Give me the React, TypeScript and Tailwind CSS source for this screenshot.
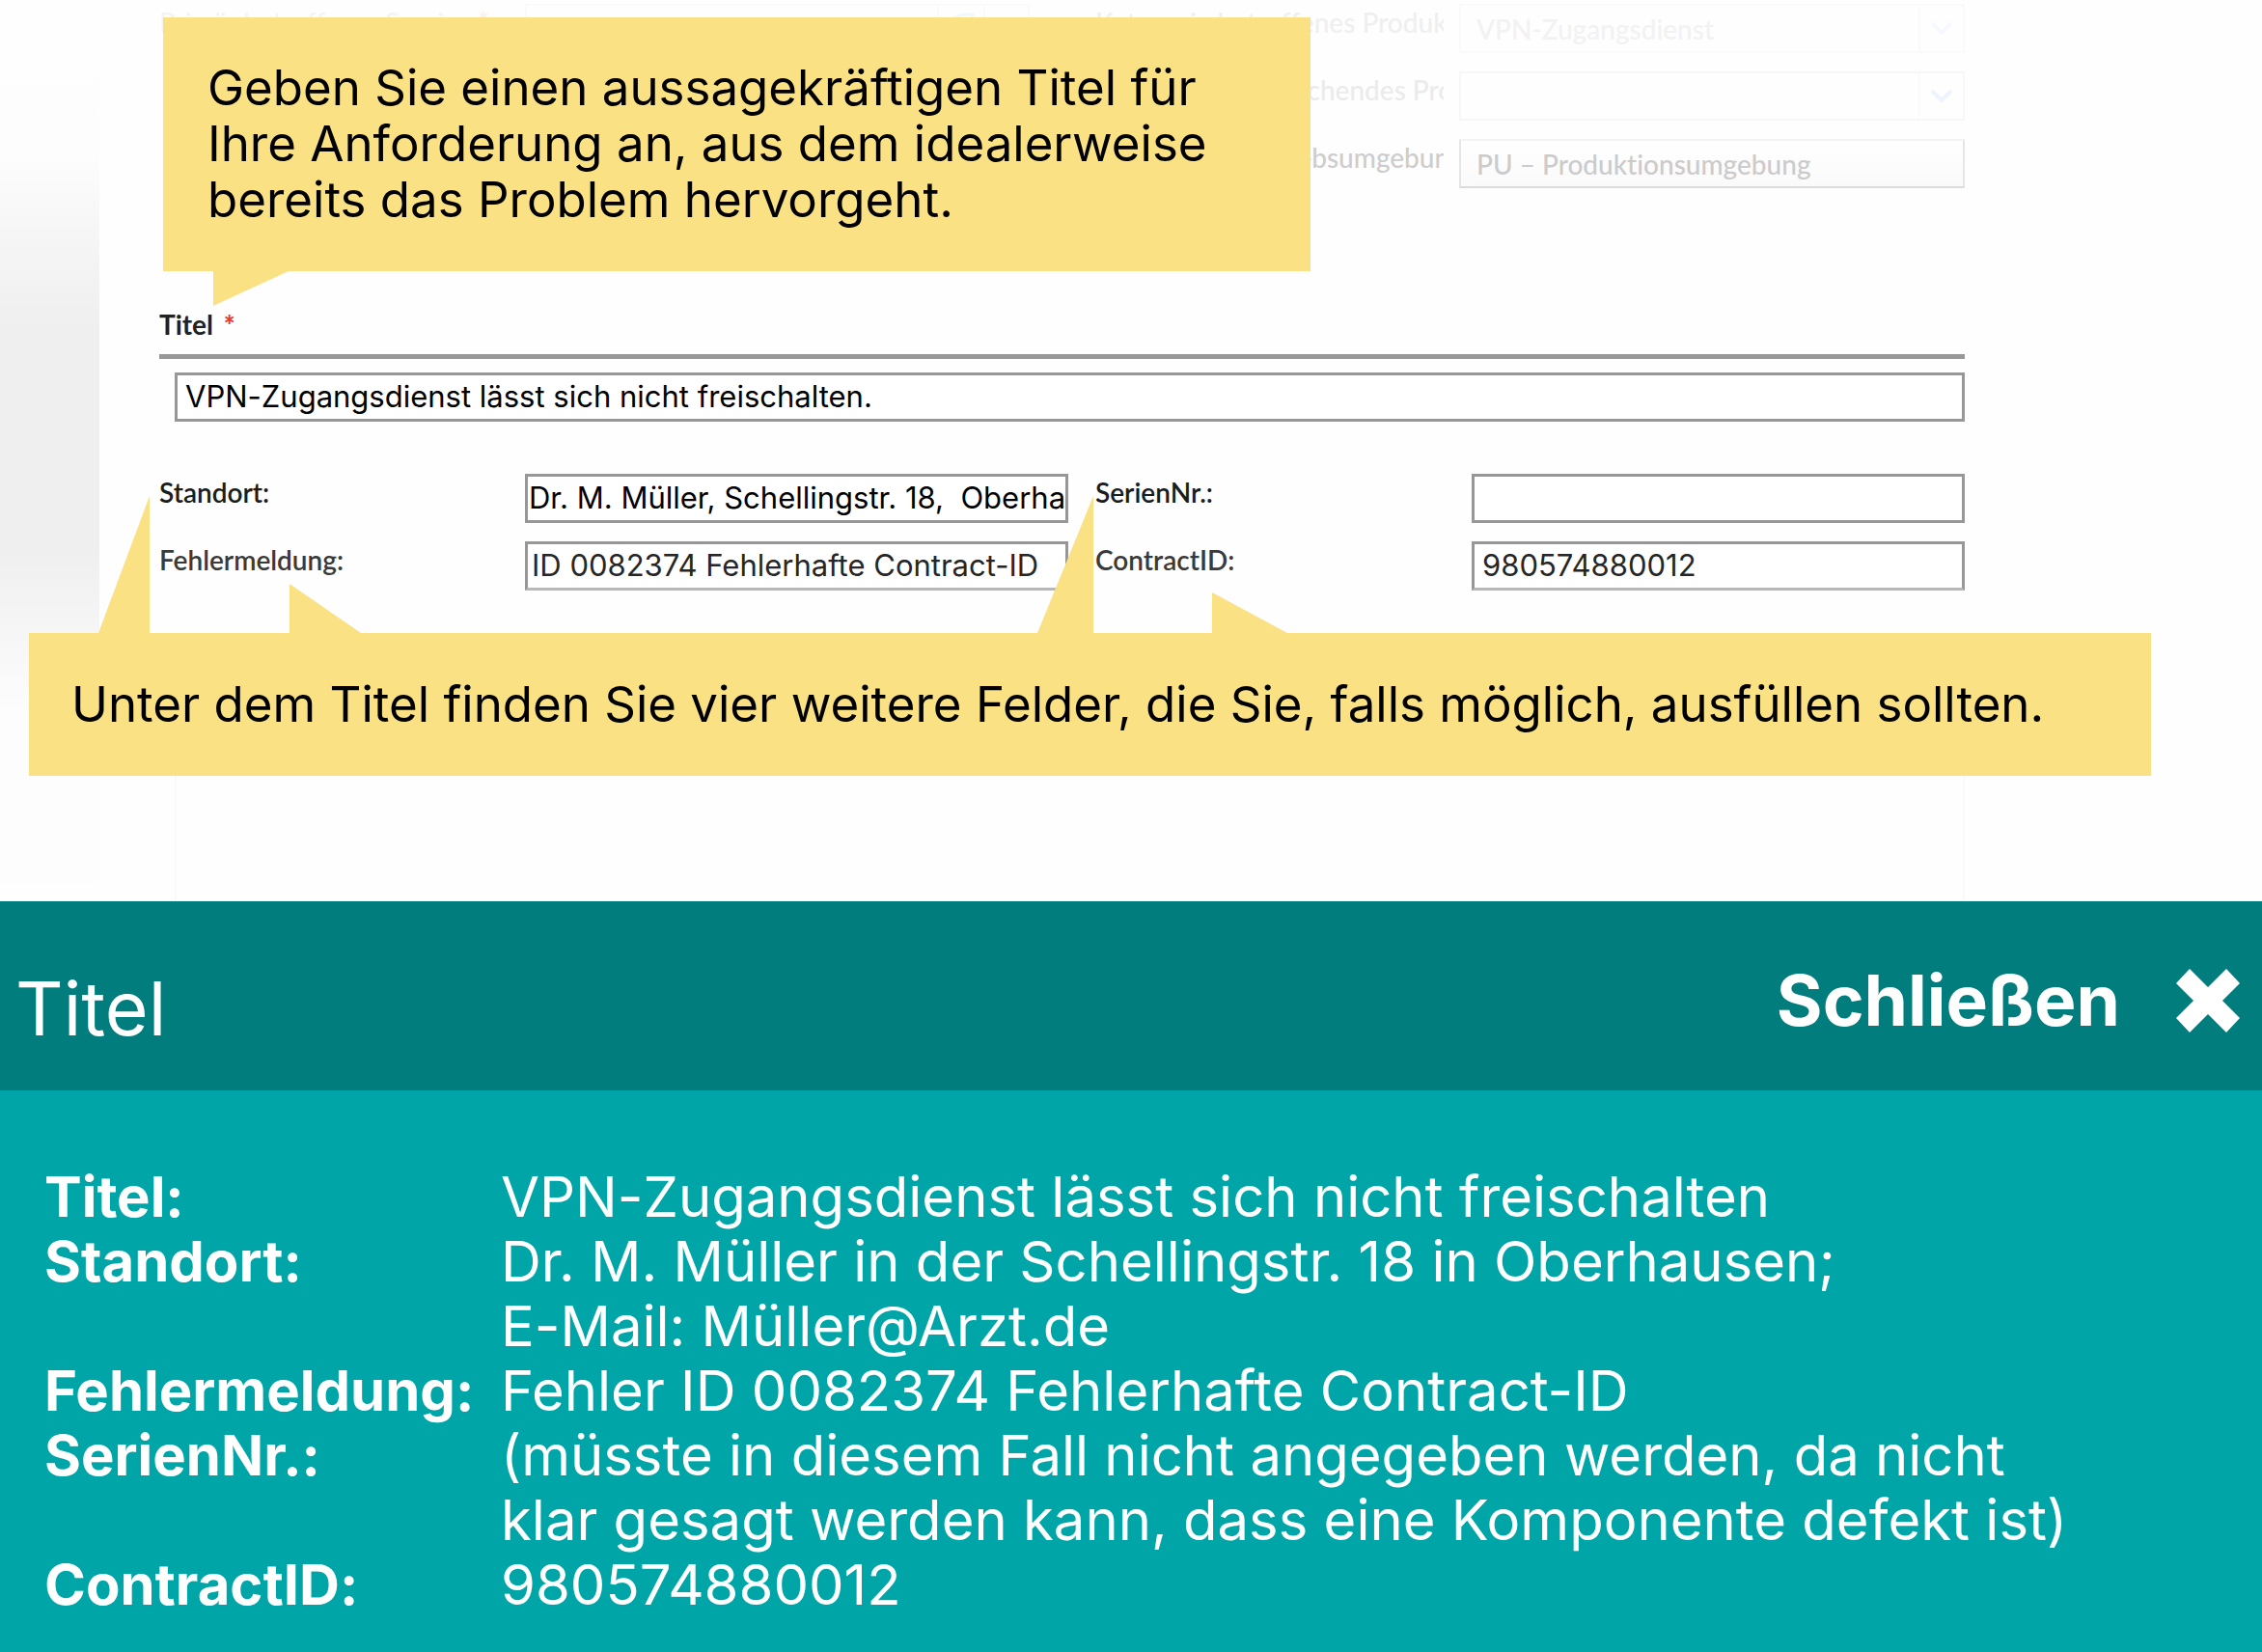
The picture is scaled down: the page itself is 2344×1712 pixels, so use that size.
import type { ReactNode } from 'react';

const YELLOW = '#fae184';

function Label({ htmlFor, className = '', children }: { htmlFor: string; className?: string; children: ReactNode }) {
  return (
    <label
      htmlFor={htmlFor}
      className={`block overflow-hidden self-start pt-px whitespace-nowrap font-['Lato',sans-serif] text-[28px] leading-9 ${className}`}
    >
      {children}
    </label>
  );
}

function TextField({ id, value, className = '' }: { id: string; value: string; className?: string }) {
  return (
    <input
      id={id}
      type="text"
      defaultValue={value}
      className={`h-[51px] w-full min-w-0 border-3 bg-white pb-0.5 text-[31px] outline-none ${className}`}
    />
  );
}

function Dropdown({ id, value, className, chevron }: { id: string; value: string; className: string; chevron?: string }) {
  return (
    <div className="relative ml-4">
      <select
        id={id}
        className={`block h-[51px] w-full appearance-none border-2 px-4 font-['Lato',sans-serif] text-[28px] font-medium outline-none ${className}`}
      >
        <option>{value}</option>
      </select>
      {chevron && (
        <div className="pointer-events-none absolute inset-y-0.5 right-0.5 flex w-[46px] items-center justify-center border-l-2 border-[#fafafa]">
          <svg width="22" height="14" viewBox="0 0 22 14" fill="none">
            <path d="M2 2 L11 11 L20 2" stroke={chevron} strokeWidth="4" strokeLinecap="round" strokeLinejoin="round" />
          </svg>
        </div>
      )}
    </div>
  );
}

function PastFields() {
  return (
    <div className="grid grid-cols-[379px_523px_1fr] gap-y-[19px] pt-1">
      <Label htmlFor="service" className="text-[#f3f3f3]">
        Primär betroffener Service <span className="text-[#fdecec]">*</span>
      </Label>
      <div className="flex h-[51px] border-2 border-[#fafafa]">
        <input id="service" type="text" className="min-w-0 flex-1 outline-none" />
        <button type="button" aria-label="Service öffnen" className="flex w-12 items-start justify-center border-l-2 border-[#fafafa] pt-1.5">
          <svg width="30" height="30" viewBox="0 0 30 30" fill="none" stroke="#f1f8fc" strokeWidth="3">
            <path d="M3 10 Q14 1 27 3 L24 14 M3 10 L3 26 H22 V14" />
          </svg>
        </button>
        <span className="w-[46px] border-l-2 border-[#fafafa]" />
      </div>
      <div className="grid grid-cols-[361px_1fr] pl-[68px]">
        <Label htmlFor="product" className="font-medium text-[#efefef]">Kategorie betroffenes Produkt</Label>
        <Dropdown id="product" value="VPN-Zugangsdienst" className="border-[#fafafa] text-[#f2f2f2]" chevron="#f5f9ff" />
      </div>
      <div className="col-start-3 grid grid-cols-[361px_1fr] pl-[68px]">
        <Label htmlFor="other" className="font-medium text-[#ebebeb]">Kategorie entsprechendes Produkt</Label>
        <Dropdown id="other" value="" className="border-[#f7f7f7]" chevron="#edf4ff" />
      </div>
      <div className="col-start-3 grid grid-cols-[361px_1fr] pl-[68px]">
        <Label htmlFor="environment" className="font-medium text-[#cdcdcd]">Eingesetzte Betriebsumgebung</Label>
        <Dropdown
          id="environment"
          value="PU – Produktionsumgebung"
          className="border-t-[#f3f3f3] border-r-[#e6e6e6] border-b-[#dcdcdc] border-l-[#e6e6e6] bg-linear-to-b from-white to-[#fafafa] text-[#cbcbcb]"
        />
      </div>
    </div>
  );
}

function TitleCallout() {
  return (
    <div className="absolute top-[18px] left-[169px] w-[1189px] bg-[#fae184] pt-11 pb-[45px] pl-[46px] text-[51px] leading-[58px] text-black">
      <p className="whitespace-nowrap">
        Geben Sie einen aussagekräftigen Titel für
        <br />
        Ihre Anforderung an, aus dem idealerweise
        <br />
        bereits das Problem hervorgeht.
      </p>
      <svg className="absolute top-full left-[52px]" width="78" height="36" viewBox="0 0 78 36">
        <polygon points="0,0 78,0 0,36" fill={YELLOW} />
      </svg>
    </div>
  );
}

function FieldsCallout() {
  return (
    <div className="absolute top-[656px] right-[115px] left-[30px] bg-[#fae184] pt-[45px] pb-[45px] pl-[44px] text-[51px] leading-[58px] text-black">
      <p className="whitespace-nowrap">Unter dem Titel finden Sie vier weitere Felder, die Sie, falls möglich, ausfüllen sollten.</p>
      <svg className="absolute bottom-full left-[72px]" width="53" height="142" viewBox="0 0 53 142">
        <polygon points="53,0 53,142 0,142" fill={YELLOW} />
      </svg>
      <svg className="absolute bottom-full left-[270px]" width="74" height="51" viewBox="0 0 74 51">
        <polygon points="0,0 0,51 74,51" fill={YELLOW} />
      </svg>
      <svg className="absolute bottom-full left-[1045px]" width="58" height="142" viewBox="0 0 58 142">
        <polygon points="58,0 58,142 0,142" fill={YELLOW} />
      </svg>
      <svg className="absolute bottom-full left-[1226px]" width="78" height="42" viewBox="0 0 78 42">
        <polygon points="0,0 0,42 78,42" fill={YELLOW} />
      </svg>
    </div>
  );
}

const details: { term: string; lines: string[] }[] = [
  { term: 'Titel:', lines: ['VPN-Zugangsdienst lässt sich nicht freischalten'] },
  { term: 'Standort:', lines: ['Dr. M. Müller in der Schellingstr. 18 in Oberhausen;', 'E-Mail: Müller@Arzt.de'] },
  { term: 'Fehlermeldung:', lines: ['Fehler ID 0082374 Fehlerhafte Contract-ID'] },
  {
    term: 'SerienNr.:',
    lines: ['(müsste in diesem Fall nicht angegeben werden, da nicht', 'klar gesagt werden kann, dass eine Komponente defekt ist)'],
  },
  { term: 'ContractID:', lines: ['980574880012'] },
];

export default function App() {
  return (
    <div className="flex min-h-screen flex-col bg-[#fefefe] font-['Inter',sans-serif] [font-variant-ligatures:none]">
      <section className="relative flex">
        <aside className="w-[103px] shrink-0 bg-[linear-gradient(to_bottom,#fefefe_0px,#fdfdfd_160px,#f6f6f6_240px,#efefef_340px,#efefef_570px,#f5f5f5_645px,#fdfdfd_740px,#fdfdfd_915px,#fefefe_916px)]" />
        <form className="flex-1 pr-[308px] pl-[62px]">
          <PastFields />
          <Label htmlFor="title" className="mt-[122px] font-bold text-[#222]">
            Titel <span className="ml-1 font-black text-[#ee3a2e]">*</span>
          </Label>
          <hr className="mt-[13px] h-[5px] border-0 bg-[#979797]" />
          <div className="mt-3.5 pl-4">
            <TextField id="title" value="VPN-Zugangsdienst lässt sich nicht freischalten." className="border-[#979797] px-2" />
          </div>
          <div className="mt-[54px] grid grid-cols-[379px_563px_1fr] gap-y-[19px]">
            <Label htmlFor="location" className="font-semibold text-[#1c1c1c]">Standort:</Label>
            <TextField id="location" value="Dr. M. Müller, Schellingstr. 18,  Oberha" className="border-[#979797] px-px" />
            <div className="grid grid-cols-[390px_1fr] pl-7">
              <Label htmlFor="serial" className="font-semibold text-[#1c1c1c]">SerienNr.:</Label>
              <TextField id="serial" value="" className="border-[#979797] px-2" />
            </div>
            <Label htmlFor="error" className="font-semibold text-[#3a3a3a]">Fehlermeldung:</Label>
            <TextField id="error" value="ID 0082374 Fehlerhafte Contract-ID" className="border-[#979797] border-b-[#b8b8b8] px-1 text-[#262626]" />
            <div className="grid grid-cols-[390px_1fr] pl-7">
              <Label htmlFor="contract" className="font-semibold text-[#3a3a3a]">ContractID:</Label>
              <TextField id="contract" value="980574880012" className="border-[#979797] border-b-[#b8b8b8] px-2 text-[#262626]" />
            </div>
          </div>
          <div className="mt-[59px] pl-4">
            <textarea aria-label="Beschreibung" className="block h-[263px] w-full resize-none border-x-2 border-[#f9f9f9] outline-none" />
          </div>
        </form>
        <TitleCallout />
        <FieldsCallout />
      </section>

      <header className="flex items-start justify-between bg-[#007d7c] pt-[58px] pr-[23px] pb-10 pl-4 text-white">
        <h1 className="pt-2 text-[77px] leading-[90px]">Titel</h1>
        <button type="button" className="flex items-center gap-[58px] text-[73px] leading-[90px] font-bold">
          Schließen
          <svg width="66" height="66" viewBox="0 0 66 66" fill="currentColor">
            <polygon points="14,0 33,19 52,0 66,15 48,33 66,51 52,66 33,47 14,66 0,51 18,33 0,15" />
          </svg>
        </button>
      </header>

      <main className="flex-1 bg-[#00a6a7] pt-[77px] pb-8 pl-[46px] text-white">
        <dl className="grid grid-cols-[473px_1fr] items-baseline text-[58px] leading-[67px]">
          {details.map(({ term, lines }) => (
            <div key={term} className="contents">
              <dt className="font-bold">{term}</dt>
              <dd>
                {lines.map((line) => (
                  <span key={line} className="block whitespace-nowrap">{line}</span>
                ))}
              </dd>
            </div>
          ))}
        </dl>
      </main>
    </div>
  );
}
